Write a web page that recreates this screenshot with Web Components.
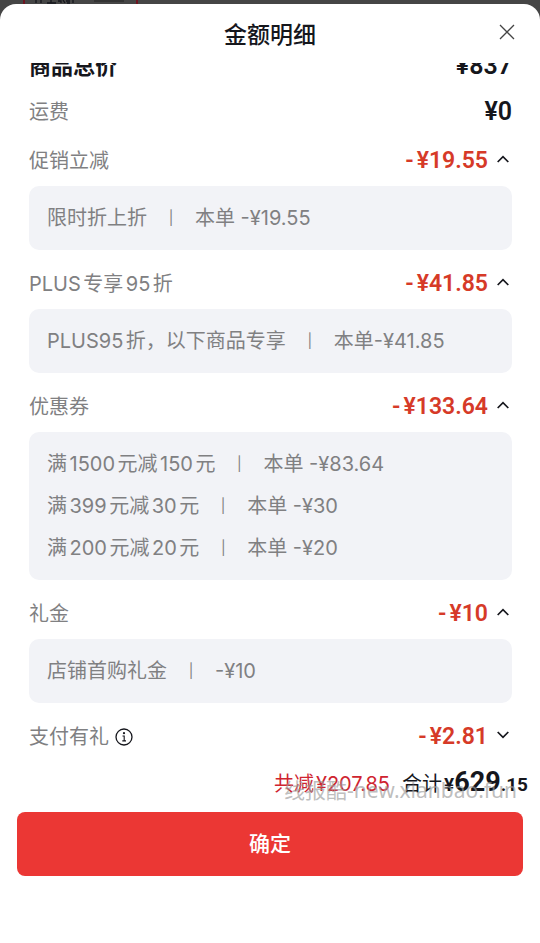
<!DOCTYPE html>
<html lang="zh-CN">
<head>
<meta charset="utf-8">
<meta name="viewport" content="width=device-width, initial-scale=1">
<title>金额明细</title>
<style>
  html, body { height: 100%; }
  body {
    margin: 0;
    background: #454545;
    color: #15161c;
    font: 20px/24px Inter, "Noto Sans CJK SC", sans-serif;
    text-autospace: normal;
    --muted: #808082;
    --red: #d63a28;
    --amount-font: Roboto, "Noto Sans CJK SC", sans-serif;
  }
</style>
</head>
<body>
<amount-sheet heading="金额明细">
  <fee-row strong label="商品总价" amount="¥837"></fee-row>
  <fee-row label="运费" amount="¥0"></fee-row>
  <discount-group label="促销立减" amount="¥19.55" open>
    <discount-item name="限时折上折">本单 -¥19.55</discount-item>
  </discount-group>
  <discount-group label="PLUS专享95折" amount="¥41.85" open>
    <discount-item name="PLUS95折，以下商品专享">本单-¥41.85</discount-item>
  </discount-group>
  <discount-group label="优惠券" amount="¥133.64" open>
    <discount-item name="满1500元减150元">本单 -¥83.64</discount-item>
    <discount-item name="满399元减30元">本单 -¥30</discount-item>
    <discount-item name="满200元减20元">本单 -¥20</discount-item>
  </discount-group>
  <discount-group label="礼金" amount="¥10" open>
    <discount-item name="店铺首购礼金">-¥10</discount-item>
  </discount-group>
  <discount-group label="支付有礼" amount="¥2.81" info></discount-group>
  <total-bar slot="footer" saved="¥207.85" whole="629" cents=".15" mark="线报酷-new.xianbao.fun"></total-bar>
  <confirm-button slot="footer">确定</confirm-button>
</amount-sheet>

<script>
const mount = (host, html) => {
  const t = document.createElement('template');
  t.innerHTML = html;
  host.attachShadow({ mode: 'open' }).append(t.content.cloneNode(true));
};

customElements.define('fee-row', class extends HTMLElement {
  connectedCallback() {
    mount(this, `
      <style>
        :host { display: flex; justify-content: space-between; align-items: center; padding-bottom: 25px; color: var(--muted); }
        :host([strong]) { padding-bottom: 22px; color: #15161c; font-weight: 700; font-size: 22px; }
        b { font: 600 25px/24px var(--amount-font); color: #15161c; }
      </style>
      <span>${this.getAttribute('label')}</span><b>${this.getAttribute('amount')}</b>`);
  }
});

customElements.define('discount-item', class extends HTMLElement {
  connectedCallback() {
    mount(this, `
      <style>
        :host { display: flex; align-items: center; color: var(--muted); }
        i { font: 14px/24px Inter, sans-serif; width: 48px; text-align: center; }
      </style>
      <span>${this.getAttribute('name')}</span><i>|</i><span><slot></slot></span>`);
  }
});

customElements.define('discount-group', class extends HTMLElement {
  connectedCallback() {
    const open = this.hasAttribute('open');
    const info = this.hasAttribute('info') ? `
      <button class="info" aria-label="说明"><svg width="18" height="18" viewBox="0 0 18 18" fill="none" stroke="#15161c">
        <circle cx="9" cy="9" r="8" stroke-width="1.3"/><circle cx="9" cy="5.2" r="1.1" fill="#15161c" stroke="none"/>
        <path d="M7.5 8h1.7v4.8M7.3 12.9h3.7" stroke-width="1.1"/></svg></button>` : '';
    mount(this, `
      <style>
        :host { display: block; }
        button { border: 0; padding: 0; background: none; color: inherit; font: inherit; display: flex; cursor: pointer; }
        .head { display: flex; align-items: center; justify-content: space-between; }
        .label { display: flex; align-items: center; gap: 6px; color: var(--muted); }
        .amount { align-items: center; gap: 9px; padding-right: 3px; font: 600 23px/24px var(--amount-font); color: var(--red); }
        .value { display: flex; gap: 3px; }
        .chevron { display: block; padding-bottom: 4px; }
        .box { display: flex; flex-direction: column; gap: 18px; margin: 13px 0 22px; padding: 20px 18px; border-radius: 10px; background: #f2f3f7; }
        .box[hidden] { display: none; }
      </style>
      <div class="head">
        <span class="label">${this.getAttribute('label')}${info}</span>
        <button class="amount" aria-expanded="${open}">
          <span class="value"><span>-</span><span>${this.getAttribute('amount')}</span></span>
          <svg class="chevron" width="12" height="8" viewBox="0 0 12 8" fill="none" stroke="#15161c" stroke-width="1.7">
            <path d="${open ? 'M.7 7 6 1.6 11.3 7' : 'M.7 1 6 6.4 11.3 1'}"/></svg>
        </button>
      </div>
      <div class="box" ${open ? '' : 'hidden'}><slot></slot></div>`);
    const button = this.shadowRoot.querySelector('.amount');
    const box = this.shadowRoot.querySelector('.box');
    if (open) button.addEventListener('click', () => {
      box.hidden = !box.hidden;
      button.setAttribute('aria-expanded', String(!box.hidden));
      button.querySelector('path').setAttribute('d', box.hidden ? 'M.7 1 6 6.4 11.3 1' : 'M.7 7 6 1.6 11.3 7');
    });
  }
});

customElements.define('total-bar', class extends HTMLElement {
  connectedCallback() {
    const a = n => this.getAttribute(n);
    mount(this, `
      <style>
        :host { position: relative; display: flex; justify-content: flex-end; align-items: baseline; padding: 0 12px; line-height: 32px; white-space: nowrap; }
        .saved { display: flex; gap: 2px; color: #cf2430; margin-right: 12px; }
        .sum { margin-right: 2px; }
        b { font: 700 19px/32px var(--amount-font); }
        b.whole { font-size: 27px; }
        .mark { position: absolute; right: 23px; top: 8px; font: 21px/32px "Noto Sans", "Noto Sans CJK SC", sans-serif; color: #9c9c9caa; pointer-events: none; }
      </style>
      <span class="saved"><span>共减</span><span>${a('saved')}</span></span>
      <span class="sum">合计</span><b>¥</b><b class="whole">${a('whole')}</b><b>${a('cents')}</b>
      <span class="mark">${a('mark')}</span>`);
  }
});

customElements.define('confirm-button', class extends HTMLElement {
  connectedCallback() {
    mount(this, `
      <style>
        :host { display: block; padding: 11px 17px 0; }
        button { width: 100%; border: 0; border-radius: 8px; padding: 20px; background: #eb3734; color: #fff; font: 500 21px/24px Inter, "Noto Sans CJK SC", sans-serif; cursor: pointer; }
      </style>
      <button><slot></slot></button>`);
  }
});

customElements.define('amount-sheet', class extends HTMLElement {
  connectedCallback() {
    mount(this, `
      <style>
        :host { display: flex; flex-direction: column; height: 100vh; }
        .behind { flex: none; display: block; height: 4px; overflow: visible; }
        section { flex: 1; min-height: 0; display: flex; flex-direction: column; background: #fff; border-radius: 16px 16px 0 0; }
        header { display: grid; grid-template-columns: 1fr auto 1fr; align-items: start; padding: 15px 24px 12px; }
        h1 { grid-column: 2; margin: 0; font: 500 23px/32px Inter, "Noto Sans CJK SC", sans-serif; }
        header button { justify-self: end; border: 0; padding: 4px 0; background: none; display: flex; cursor: pointer; }
        main { flex: 1; min-height: 0; overflow-y: auto; scrollbar-width: none; padding: 0 28px 0 29px; }
        .rows { padding: 20px 0 40px; }
        footer { padding: 0 0 67px; }
      </style>
      <svg class="behind" width="160" height="4" viewBox="0 0 160 4" fill="none">
        <path d="M24 0v4M137 0v4" stroke="#6e1420" stroke-width="2"/>
        <path d="M36 0v3M41 0v3M47 3h9M51 0v3M58 1h3v2M63 0l2 3M67 3h3M73 0v3M66 1h4" stroke="#15161c" stroke-width="1.3"/>
        <path d="M94 1h30" stroke="#333" stroke-width="2"/>
      </svg>
      <section role="dialog" aria-label="${this.getAttribute('heading')}">
        <header>
          <h1>${this.getAttribute('heading')}</h1>
          <button aria-label="关闭"><svg width="18" height="18" viewBox="0 0 18 18" fill="none" stroke="#444" stroke-width="1.3"><path d="M2 2l14 14M16 2 2 16"/></svg></button>
        </header>
        <main><div class="rows"><slot></slot></div></main>
        <footer><slot name="footer"></slot></footer>
      </section>`);
  }
});

document.querySelector('amount-sheet').shadowRoot.querySelector('main').scrollTop = 29;
</script>
</body>
</html>
